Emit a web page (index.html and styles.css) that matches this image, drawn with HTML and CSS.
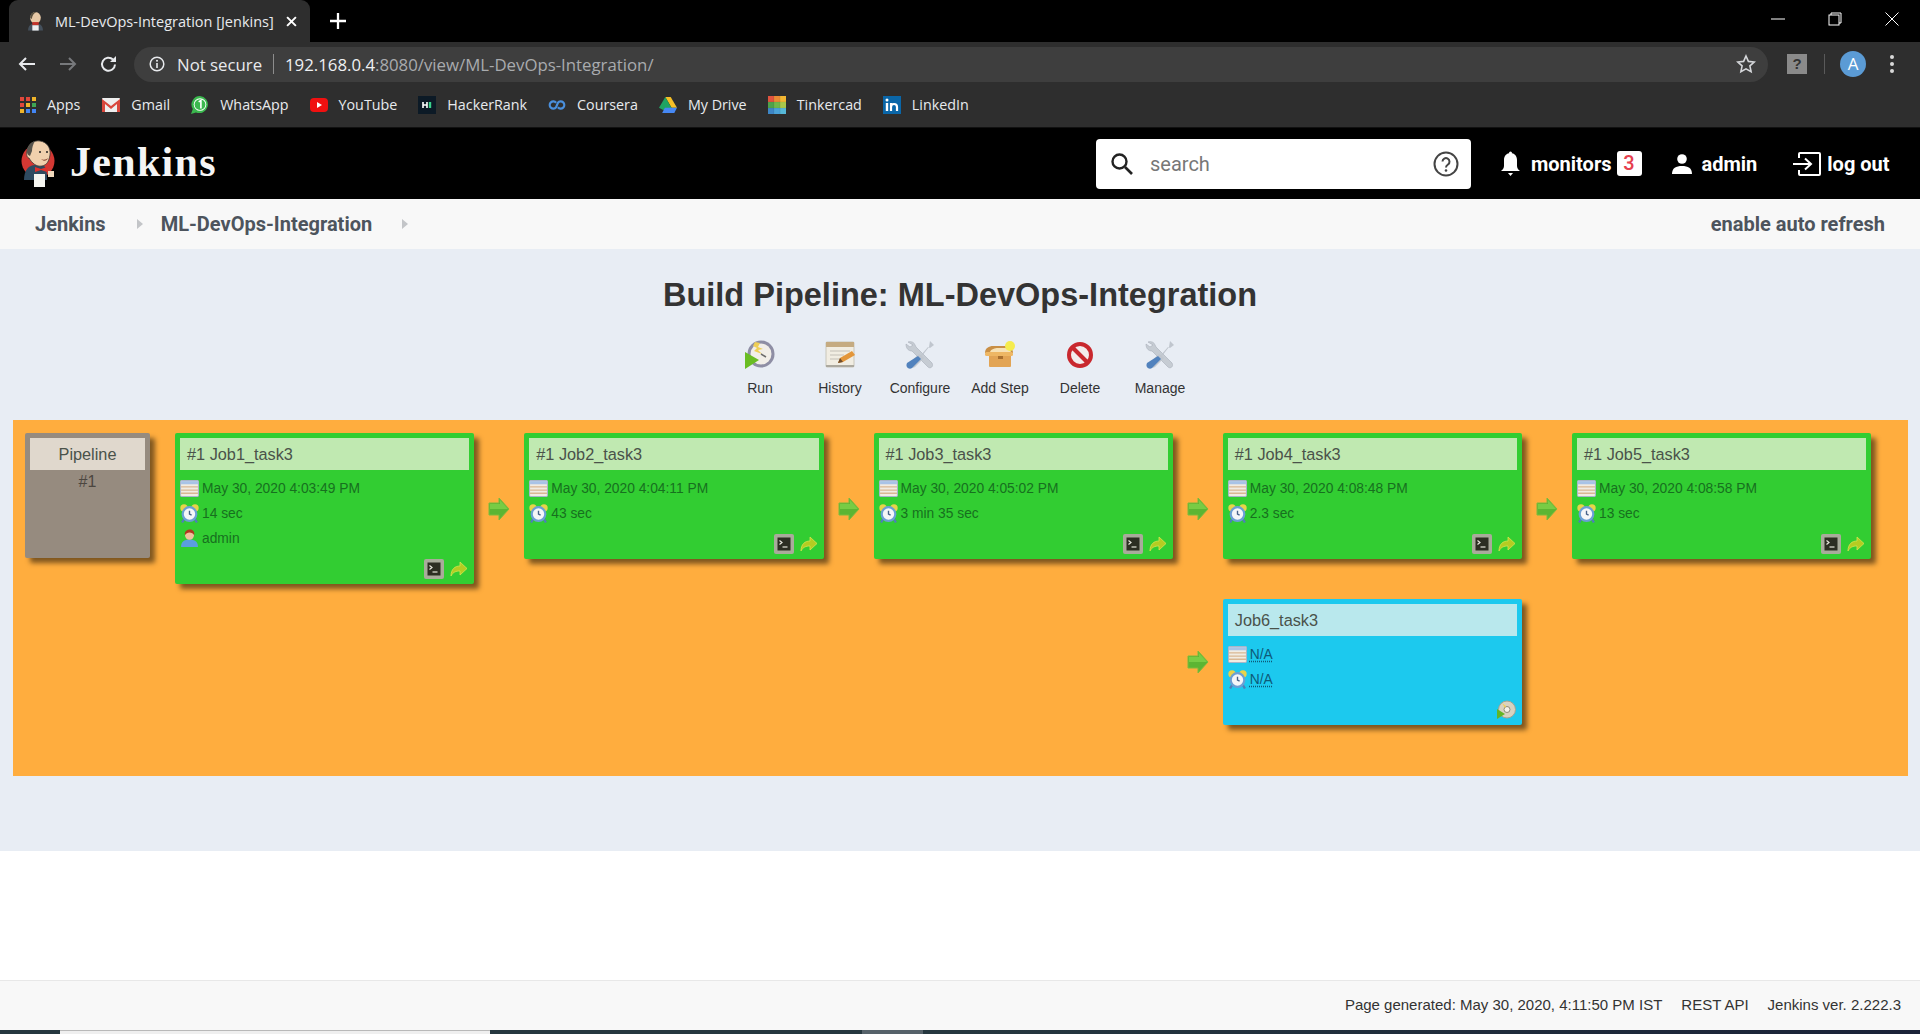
FILE: index.html
```html
<!DOCTYPE html>
<html lang="en">
<head>
<meta charset="utf-8">
<title>ML-DevOps-Integration [Jenkins]</title>
<link rel="stylesheet" href="styles.css">
</head>
<body>
<svg class="sprite" aria-hidden="true">
  <symbol id="i-cal" viewBox="0 0 18 18">
    <rect x="0.5" y="1.5" width="17" height="15" rx="1" fill="#f1ece2" stroke="#a9b6c9"/>
    <rect x="1" y="2" width="16" height="3" fill="#a8c3e6"/>
    <path d="M1 7.5h16M1 10.5h16M1 13.5h16" stroke="#d9b793" stroke-width="1.2"/>
  </symbol>
  <symbol id="i-clock" viewBox="0 0 18 18">
    <circle cx="3.800" cy="3.800" r="3.500" fill="#e8d34a"/>
    <circle cx="14.200" cy="3.800" r="3.500" fill="#e8d34a"/>
    <path d="M4 14l-2 3.500M14 14l2 3.500" stroke="#4d7fb8" stroke-width="2.200"/>
    <circle cx="9" cy="9.500" r="7.500" fill="#6a9fd4"/>
    <circle cx="9" cy="9.500" r="5.400" fill="#f5f6f8"/>
    <path d="M9 6.500v3l2 1" stroke="#47628a" stroke-width="1.300" fill="none"/>
  </symbol>
  <symbol id="i-user" viewBox="0 0 18 18">
    <path d="M1 17c0-5 3-7 8-7s8 2 8 7z" fill="#5b9ee0"/>
    <circle cx="9" cy="6" r="4.200" fill="#f0c09c"/>
    <path d="M4.600 6C4 2 7 .5 9.500.5c3 0 4.500 2.500 4 5.500-1-2-2.500-2.800-4.500-2.800S6 4 4.600 6z" fill="#b0391f"/>
  </symbol>
  <symbol id="i-term" viewBox="0 0 20 20">
    <rect x="0" y="0" width="20" height="20" rx="2" fill="#a9ab9b"/>
    <rect x="3.500" y="3.500" width="13" height="13" fill="#2c2e22"/>
    <path d="M5.500 6.500l2.500 2-2.500 2" stroke="#e7e7dc" stroke-width="1.200" fill="none"/>
    <path d="M8.500 13h5" stroke="#e7e7dc" stroke-width="1.200"/>
  </symbol>
  <symbol id="i-next" viewBox="0 0 18 18">
    <path d="M1 16C1 9 5 6 10 6V2l7 6.500-7 6.500v-4c-4 0-7 1-9 5z" fill="#b5cc22" stroke="#d4e34e" stroke-width=".8"/>
  </symbol>
  <symbol id="i-arrow" viewBox="0 0 22 24">
    <path d="M1 6h10V1l10 11-10 11v-5H1z" fill="#5cb533" stroke="#7dbb3c"/>
    <path d="M2 7h10V3l8 9H2z" fill="#78cc45"/>
  </symbol>
  <symbol id="i-run" viewBox="0 0 32 32">
    <circle cx="17" cy="15" r="13.500" fill="#8e8ea4"/>
    <circle cx="17" cy="15" r="10.500" fill="#f1eee8"/>
    <path d="M11 3l5 1-2 4 5 2-5 1 4 4-8-3 3-3-4-2z" fill="#efcf56"/>
    <path d="M17 15l5 3" stroke="#6b6b6b" stroke-width="1.500"/>
    <path d="M1 13l14 8-14 9z" fill="#69bd22"/>
  </symbol>
  <symbol id="i-history" viewBox="0 0 32 32">
    <rect x="2" y="3" width="28" height="25" rx="1" fill="#f1ede2" stroke="#c9c6ba"/>
    <rect x="2" y="3" width="28" height="5" fill="#c5ab81"/>
    <path d="M6 12h20M6 16h14M6 20h10" stroke="#c4c0b5" stroke-width="1.200"/>
    <rect x="2" y="26" width="28" height="2" fill="#aca99f"/>
    <path d="M14 24l2-5 12-7 3 4-12 7z" fill="#e3963a"/>
    <path d="M14 24l2-5 3 4z" fill="#6d4c2d"/>
  </symbol>
  <symbol id="i-conf" viewBox="0 0 32 32">
    <path d="M4 3c3-1 6 0 7 3l1 2 16 16c2 4-2 6-4 4L8 12c-3 0-6-2-6-7l4 3 3-2z" fill="#c6ccd3" stroke="#a7afb8" stroke-width=".6"/>
    <path d="M26 2l4 4-4 3-2-1-7 8 3 3-9 9c-3 2-7-1-5-5l9-8 3 2 7-9z" fill="#c0c6ce"/>
    <path d="M14 17l3 3-9 9c-3 2-7-1-5-5z" fill="#5182bd"/>
  </symbol>
  <symbol id="i-box" viewBox="0 0 32 32">
    <path d="M5 14h22v13a1 1 0 0 1-1 1H6a1 1 0 0 1-1-1z" fill="#e2a454"/>
    <path d="M1 14c0-5 4-7 8-7h13c4 0 7 3 7 7z" fill="#c98f45"/>
    <path d="M6 13c1-3 5-4 8-4h7c3 0 5 2 6 4z" fill="#f7e2b5"/>
    <rect x="1" y="13" width="28" height="4" rx="1.500" fill="#eeb764"/>
    <rect x="14" y="17" width="5" height="3" fill="#a86f2e"/>
    <circle cx="26" cy="7" r="5" fill="#f5ec4e"/>
  </symbol>
  <symbol id="i-del" viewBox="0 0 32 32">
    <circle cx="16" cy="16" r="11" fill="#f3ecec" stroke="#c9282e" stroke-width="4"/>
    <path d="M8 8l16 16" stroke="#c9282e" stroke-width="4"/>
  </symbol>
  <symbol id="i-cd" viewBox="0 0 20 20">
    <circle cx="11" cy="9.500" r="8.500" fill="#d8d2c0" stroke="#a7a290"/>
    <circle cx="11" cy="9.500" r="3" fill="#f5f2ea" stroke="#8f8b7a"/>
    <path d="M6 3l4 3-1 2z" fill="#f0cf5a"/>
    <path d="M1 9l8 5-8 5z" fill="#62b526"/>
  </symbol>
</svg>

<header class="tabstrip">
  <div class="tab">
    <svg class="fav" viewBox="0 0 16 18"><ellipse cx="8" cy="6" rx="5" ry="5.500" fill="#e8c9a6"/><path d="M3 6C3 2 6 0 9 .5 6 2 5 4 4.500 7z" fill="#59503f"/><path d="M1 18c0-5 3-7 7-7s7 2 7 7z" fill="#44505c"/><rect x="5" y="10" width="6" height="3" fill="#c2342b"/><rect x="5" y="13" width="6" height="5" fill="#eee"/></svg>
    <span class="tab-title">ML-DevOps-Integration [Jenkins]</span>
    <svg class="tab-x" viewBox="0 0 10 10"><path d="M1 1l8 8M9 1l-8 8" stroke="#fff" stroke-width="1.800"/></svg>
  </div>
  <svg class="newtab" viewBox="0 0 14 14"><path d="M7 0v14M0 7h14" stroke="#fff" stroke-width="2"/></svg>
  <div class="winctl">
    <svg viewBox="0 0 14 14"><path d="M0 7h14" stroke="#fff"/></svg>
    <svg viewBox="0 0 14 14"><path d="M3 3V1h10v10h-2" fill="none" stroke="#fff"/><rect x="1" y="3" width="10" height="10" fill="none" stroke="#fff"/></svg>
    <svg viewBox="0 0 14 14"><path d="M.5.500l13 13M13.500.500l-13 13" stroke="#fff"/></svg>
  </div>
</header>

<div class="toolbar">
  <svg class="nav" viewBox="0 0 18 18"><path d="M17 9H2M8 3L2 9l6 6" fill="none" stroke="#e8eaed" stroke-width="2"/></svg>
  <svg class="nav" viewBox="0 0 18 18"><path d="M1 9h15M10 3l6 6-6 6" fill="none" stroke="#77797c" stroke-width="2"/></svg>
  <svg class="nav" viewBox="0 0 18 18"><path d="M15 9.500A6.500 6.500 0 1 1 13 4.500" fill="none" stroke="#e8eaed" stroke-width="2"/><path d="M16 1v6h-6z" fill="#e8eaed"/></svg>
  <div class="omnibox">
    <svg class="info" viewBox="0 0 16 16"><circle cx="8" cy="8" r="6.800" fill="none" stroke="#e8eaed" stroke-width="1.500"/><path d="M8 7v5" stroke="#e8eaed" stroke-width="1.600"/><circle cx="8" cy="4.800" r="1" fill="#e8eaed"/></svg>
    <span class="secure">Not secure</span>
    <span class="omni-sep"></span>
    <span class="url"><b>192.168.0.4</b>:8080/view/ML-DevOps-Integration/</span>
    <svg class="star" viewBox="0 0 20 20"><path d="M10 2l2.400 5.400 5.800.600-4.300 3.900 1.200 5.800L10 14.800l-5.100 2.900 1.200-5.800L1.800 8l5.800-.600z" fill="none" stroke="#d5d7da" stroke-width="1.600"/></svg>
  </div>
  <div class="ext">?</div>
  <span class="tool-sep"></span>
  <div class="avatar">A</div>
  <div class="dots"><i></i><i></i><i></i></div>
</div>

<nav class="bookmarks">
  <a class="bm bm-apps"><svg viewBox="0 0 16 16"><path d="M0 0h4v4H0z" fill="#e0483b"/><path d="M6 0h4v4H6z" fill="#e0483b"/><path d="M12 0h4v4h-4z" fill="#f0b429"/><path d="M0 6h4v4H0z" fill="#e0483b"/><path d="M6 6h4v4H6z" fill="#f0b429"/><path d="M12 6h4v4h-4z" fill="#3fa654"/><path d="M0 12h4v4H0z" fill="#f0b429"/><path d="M6 12h4v4H6z" fill="#4285f4"/><path d="M12 12h4v4h-4z" fill="#4285f4"/></svg>Apps</a>
  <a class="bm"><svg viewBox="0 0 18 14"><rect width="18" height="14" rx="1" fill="#eee"/><path d="M0 1l9 7 9-7v13h-3V6L9 11 3 6v8H0z" fill="#d9473c"/></svg>Gmail</a>
  <a class="bm"><svg viewBox="0 0 20 20"><path d="M10 0a9.500 9.500 0 0 0-8 14.500L0 20l5.500-1.800A9.500 9.500 0 1 0 10 0z" fill="#3bb84e"/><circle cx="10" cy="9.500" r="7" fill="#fff"/><circle cx="10" cy="9.500" r="6" fill="#3bb84e"/><path d="M8.500 6.500L11 5v9" fill="none" stroke="#fff" stroke-width="1.800"/></svg>WhatsApp</a>
  <a class="bm"><svg viewBox="0 0 18 14"><rect width="18" height="14" rx="4" fill="#f01010"/><path d="M7 4l5 3-5 3z" fill="#fff"/></svg>YouTube</a>
  <a class="bm"><svg viewBox="0 0 18 18"><rect width="18" height="18" fill="#0c1a26"/><path d="M5 6v6M9 6v6M5 9h4" stroke="#fff" stroke-width="1.600"/><path d="M12 6v6" stroke="#39d28a" stroke-width="2.400"/></svg>HackerRank</a>
  <a class="bm"><svg viewBox="0 0 20 12"><path d="M9 3.500A4 4 0 1 0 9 8.500L11 3.500A4 4 0 1 1 11 8.500" fill="none" stroke="#4a8fdc" stroke-width="2.400"/></svg>Coursera</a>
  <a class="bm"><svg viewBox="0 0 20 18"><path d="M7 0h6l7 12h-6z" fill="#f6bf26"/><path d="M7 0l6.800 12-3 6L0 12z" fill="#1fa463"/><path d="M6.500 12H20l-3 6H3.500z" fill="#4688f4"/></svg>My Drive</a>
  <a class="bm"><svg viewBox="0 0 20 20"><rect width="6.600" height="6.600" fill="#e0533f"/><rect x="6.700" width="6.600" height="6.600" fill="#e98a34"/><rect x="13.400" width="6.600" height="6.600" fill="#f2b632"/><rect y="6.700" width="6.600" height="6.600" fill="#4ea24b"/><rect x="6.700" y="6.700" width="6.600" height="6.600" fill="#70b84a"/><rect x="13.400" y="6.700" width="6.600" height="6.600" fill="#a9c84a"/><rect y="13.400" width="6.600" height="6.600" fill="#3d86c6"/><rect x="6.700" y="13.400" width="6.600" height="6.600" fill="#4aa2d8"/><rect x="13.400" y="13.400" width="6.600" height="6.600" fill="#56b8d8"/></svg>Tinkercad</a>
  <a class="bm"><svg viewBox="0 0 18 18"><rect width="18" height="18" fill="#0a66a8"/><path d="M4 7v8" stroke="#fff" stroke-width="2.400"/><circle cx="4" cy="4" r="1.500" fill="#fff"/><path d="M8 15V7M8 11c0-4 6-4 6 0v4" fill="none" stroke="#fff" stroke-width="2.200"/></svg>LinkedIn</a>
</nav>

<header class="jk-head">
  <svg class="logo" viewBox="0 0 36 48">
    <circle cx="18" cy="21" r="16.500" fill="#d33833"/>
    <path d="M4 40c0-10 5-15 11-15l9 1c3 2 3 8 3 14z" fill="#2f4a60"/>
    <path d="M7 11C8 4 14 0 20 1c7 1 11 7 10 14-1 6-3 10-8 11-6 1-10-3-13-8-2 0-3-4-2-7z" fill="#f0d0ad" stroke="#3c3a36" stroke-width=".8"/>
    <path d="M7 12C7 5 12 2 15 1c-2 3-3 7-3 10l-2 5c-2-1-3-2-3-4z" fill="#57544d"/>
    <path d="M21 19c2 1 5 1 7-1-1 3-4 4-7 1z" fill="#8c4c36"/>
    <circle cx="20" cy="12" r="1" fill="#222"/><circle cx="27" cy="12" r="1" fill="#222"/>
    <path d="M15 27l6 2 6-2v5l-6-2-6 2z" fill="#e0302b"/>
    <path d="M14 34h11v13H14z" fill="#f5f5f0"/>
    <path d="M28 31h6v6h-6z" fill="#f0d8bc"/>
  </svg>
  <span class="brand">Jenkins</span>
  <div class="search">
    <svg class="s-ico" viewBox="0 0 24 24"><circle cx="9.500" cy="9.500" r="7" fill="none" stroke="#222" stroke-width="2.400"/><path d="M15 15l7 7" stroke="#222" stroke-width="2.600"/></svg>
    <span class="s-text">search</span>
    <svg class="s-help" viewBox="0 0 26 26"><circle cx="13" cy="13" r="11.500" fill="none" stroke="#444" stroke-width="2"/><path d="M9.500 10.500a3.500 3.500 0 1 1 5.500 3c-1.500 1-2 1.500-2 3" fill="none" stroke="#444" stroke-width="2"/><circle cx="13" cy="19.500" r="1.300" fill="#444"/></svg>
  </div>
  <svg class="h-bell" viewBox="0 0 21 26"><path d="M10.500 2c-4 0-6.500 3-6.500 7v6c0 2-1.500 4-3 5h19c-1.500-1-3-3-3-5V9c0-4-2.500-7-6.500-7z" fill="#fff"/><circle cx="10.500" cy="2" r="1.500" fill="#fff"/><path d="M8 22h5l-2.500 3z" fill="#fff"/></svg>
  <span class="h-link h-mon">monitors</span>
  <span class="badge">3</span>
  <svg class="h-user" viewBox="0 0 20 20"><circle cx="10" cy="5" r="4.800" fill="#fff"/><path d="M0 20c0-6 4-8 10-8s10 2 10 8z" fill="#fff"/></svg>
  <span class="h-link h-adm">admin</span>
  <svg class="h-out" viewBox="0 0 28 24"><path d="M6 6V2a1 1 0 0 1 1-1h19a1 1 0 0 1 1 1v20a1 1 0 0 1-1 1H7a1 1 0 0 1-1-1v-4" fill="none" stroke="#fff" stroke-width="2"/><path d="M0 12h17M12 6.500l6 5.500-6 5.500" fill="none" stroke="#fff" stroke-width="2"/></svg>
  <span class="h-link">log out</span>
</header>

<div class="crumbs">
  <a class="crumb">Jenkins</a><i class="tri tri-a"></i>
  <a class="crumb">ML-DevOps-Integration</a><i class="tri tri-b"></i>
  <a class="crumb refresh">enable auto refresh</a>
</div>

<main class="main">
  <h1 class="title">Build Pipeline: ML-DevOps-Integration</h1>
  <div class="actions">
    <a class="act"><svg><use href="#i-run"/></svg>Run</a>
    <a class="act"><svg><use href="#i-history"/></svg>History</a>
    <a class="act"><svg><use href="#i-conf"/></svg>Configure</a>
    <a class="act"><svg><use href="#i-box"/></svg>Add Step</a>
    <a class="act"><svg><use href="#i-del"/></svg>Delete</a>
    <a class="act"><svg><use href="#i-conf"/></svg>Manage</a>
  </div>
  <section class="board">
    <div class="pipe">
      <div class="bar bar-pipe">Pipeline</div>
      <div class="pipe-no">#1</div>
    </div>

    <div class="card ok job1 c3">
      <div class="bar">#1 Job1_task3</div>
      <div class="row"><svg><use href="#i-cal"/></svg>May 30, 2020 4:03:49 PM</div>
      <div class="row"><svg><use href="#i-clock"/></svg>14 sec</div>
      <div class="row"><svg><use href="#i-user"/></svg>admin</div>
      <div class="foot"><svg class="f-term"><use href="#i-term"/></svg><svg class="f-next"><use href="#i-next"/></svg></div>
    </div>
    <div class="arr c4"><svg><use href="#i-arrow"/></svg></div>

    <div class="card ok c5">
      <div class="bar">#1 Job2_task3</div>
      <div class="row"><svg><use href="#i-cal"/></svg>May 30, 2020 4:04:11 PM</div>
      <div class="row"><svg><use href="#i-clock"/></svg>43 sec</div>
      <div class="foot"><svg class="f-term"><use href="#i-term"/></svg><svg class="f-next"><use href="#i-next"/></svg></div>
    </div>
    <div class="arr c6"><svg><use href="#i-arrow"/></svg></div>

    <div class="card ok c7">
      <div class="bar">#1 Job3_task3</div>
      <div class="row"><svg><use href="#i-cal"/></svg>May 30, 2020 4:05:02 PM</div>
      <div class="row"><svg><use href="#i-clock"/></svg>3 min 35 sec</div>
      <div class="foot"><svg class="f-term"><use href="#i-term"/></svg><svg class="f-next"><use href="#i-next"/></svg></div>
    </div>
    <div class="arr c8"><svg><use href="#i-arrow"/></svg></div>

    <div class="card ok c9">
      <div class="bar">#1 Job4_task3</div>
      <div class="row"><svg><use href="#i-cal"/></svg>May 30, 2020 4:08:48 PM</div>
      <div class="row"><svg><use href="#i-clock"/></svg>2.3 sec</div>
      <div class="foot"><svg class="f-term"><use href="#i-term"/></svg><svg class="f-next"><use href="#i-next"/></svg></div>
    </div>
    <div class="arr c10"><svg><use href="#i-arrow"/></svg></div>

    <div class="card ok c11">
      <div class="bar">#1 Job5_task3</div>
      <div class="row"><svg><use href="#i-cal"/></svg>May 30, 2020 4:08:58 PM</div>
      <div class="row"><svg><use href="#i-clock"/></svg>13 sec</div>
      <div class="foot"><svg class="f-term"><use href="#i-term"/></svg><svg class="f-next"><use href="#i-next"/></svg></div>
    </div>

    <div class="arr arr-r2 c8"><svg><use href="#i-arrow"/></svg></div>
    <div class="card idle job6 c9">
      <div class="bar">Job6_task3</div>
      <div class="row"><svg><use href="#i-cal"/></svg><a class="na">N/A</a></div>
      <div class="row"><svg><use href="#i-clock"/></svg><a class="na">N/A</a></div>
      <div class="foot"><svg class="f-cd"><use href="#i-cd"/></svg></div>
    </div>
  </section>
</main>

<div class="blank"></div>

<footer class="footer">
  <span>Page generated: May 30, 2020, 4:11:50 PM IST</span>
  <span>REST API</span>
  <span>Jenkins ver. 2.222.3</span>
</footer>
<div class="taskstrip"><i class="ts-a"></i><i class="ts-b"></i></div>
</body>
</html>
```

FILE: styles.css
```css
* { box-sizing: border-box; }
html, body { margin: 0; padding: 0; }
body {
  width: 1920px;
  height: 1034px;
  overflow: hidden;
  display: flex;
  flex-direction: column;
  background: #fff;
  font-family: "Liberation Sans", Arial, sans-serif;
  color: #333;
}
svg { flex: none; display: block; }
.sprite { position: absolute; width: 0; height: 0; overflow: hidden; }

/* browser chrome */
.tabstrip {
  height: 42px;
  background: #000;
  display: flex;
  align-items: flex-end;
  padding-left: 9px;
  flex: none;
}
.tab {
  width: 301px;
  height: 42px;
  background: #2e2e2e;
  border-radius: 9px 9px 0 0;
  display: flex;
  align-items: center;
  padding-left: 18px;
  color: #e8eaed;
  font: 14.5px "Open Sans", sans-serif;
}
.fav { width: 17px; height: 20px; margin-right: 11px; }
.tab-title { width: 219px; white-space: nowrap; }
.tab-x { width: 11px; height: 11px; margin-left: 12px; }
.newtab { width: 16px; height: 16px; margin: 0 0 13px 20px; }
.winctl { margin-left: auto; display: flex; align-self: flex-start; gap: 43px; padding: 12px 21px 0 0; }
.winctl svg { width: 14px; height: 14px; }
.toolbar {
  height: 44px;
  background: #2e2e2e;
  display: flex;
  align-items: center;
  padding: 0 0 0 18px;
  flex: none;
}
.nav { width: 18px; height: 18px; margin-right: 23px; }
.nav + .nav { margin-right: 23px; }
.nav + .nav + .nav { margin-right: 16px; }
.omnibox {
  width: 1634px;
  height: 35px;
  border-radius: 18px;
  background: #3e3e3e;
  display: flex;
  align-items: center;
  padding-left: 15px;
  font: 16.8px "Open Sans", sans-serif;
  color: #e8eaed;
}
.info { width: 16px; height: 16px; margin-right: 12px; }
.secure { width: 85px; white-space: nowrap; }
.omni-sep { width: 1px; height: 20px; background: #8d8d8d; margin: 0 11px; }
.url { width: 368px; white-space: nowrap; color: #a9abae; }
.url b { font-weight: 400; color: #eef0f2; }
.star { width: 20px; height: 20px; margin-left: auto; margin-right: 12px; }
.ext {
  width: 20px;
  height: 20px;
  margin-left: 19px;
  background: #8a8a8a;
  color: #333;
  font: bold 15px/20px "Liberation Sans", sans-serif;
  text-align: center;
}
.tool-sep { width: 1px; height: 20px; background: #5a5a5a; margin: 0 15px 0 17px; }
.avatar {
  width: 26px;
  height: 26px;
  border-radius: 50%;
  background: #5b9bd5;
  color: #fff;
  font: 17px/26px "Open Sans", sans-serif;
  text-align: center;
}
.dots { display: flex; flex-direction: column; gap: 3px; margin-left: 24px; }
.dots i { width: 4px; height: 4px; border-radius: 50%; background: #d8d8d8; }
.bookmarks {
  height: 42px;
  background: #2e2e2e;
  display: flex;
  align-items: center;
  padding: 0 0 4px 20px;
  color: #e8eaed;
  font: 14.3px "Open Sans", sans-serif;
  gap: 21px;
  flex: none;
  border-bottom: 1px solid #111;
}
.bm { display: flex; align-items: center; gap: 11px; white-space: nowrap; }
.bm svg { width: 18px; height: 18px; }
.bm-apps { margin-right: 1px; }
.bm-apps svg { width: 16px; height: 16px; }

/* Jenkins header */
.jk-head {
  height: 71px;
  background: #000;
  display: flex;
  align-items: center;
  padding-left: 20px;
  color: #fff;
  flex: none;
}
.logo { width: 36px; height: 48px; }
.brand {
  margin: 0 0 4px 14px;
  width: 1026px;
  font: bold 42px "Liberation Serif", serif;
  letter-spacing: 1.3px;
  color: #f5f5f5;
}
.search {
  width: 375px;
  height: 50px;
  background: #fff;
  border-radius: 4px;
  display: flex;
  align-items: center;
  padding-left: 14px;
}
.s-ico { width: 24px; height: 24px; }
.s-text { margin-left: 16px; font: 20px Roboto, sans-serif; color: #777; }
.s-help { width: 26px; height: 26px; margin-left: auto; margin-right: 12px; }
.h-bell { width: 21px; height: 26px; margin-left: 29px; }
.h-link { font: 700 20px Roboto, sans-serif; white-space: nowrap; }
.h-mon { margin-left: 10px; }
.badge {
  width: 25px;
  height: 25px;
  margin-left: 5px;
  background: #fff;
  border-radius: 3px;
  color: #e6404f;
  font: 500 20px/25px Roboto, sans-serif;
  text-align: center;
}
.h-user { width: 20px; height: 20px; margin-left: 30px; }
.h-adm { margin-left: 10px; }
.h-out { width: 28px; height: 24px; margin: 0 6px 0 36px; }

/* breadcrumb */
.crumbs {
  height: 50px;
  background: #f8f8f8;
  display: flex;
  align-items: center;
  padding: 0 35px;
  flex: none;
}
.crumb { font: 700 20px Roboto, sans-serif; color: #4d545d; white-space: nowrap; }
.tri { width: 0; height: 0; border: 5px solid transparent; border-left: 6px solid #c3c5c8; border-right: 0; }
.tri-a { margin: 0 18px 0 31px; }
.tri-b { margin-left: 30px; }
.refresh { margin-left: auto; }

/* main */
.main {
  height: 602px;
  background: #e8edf4;
  padding-top: 26px;
  flex: none;
}
.title {
  margin: 0;
  text-align: center;
  font: bold 32.500px/40px "Liberation Sans", sans-serif;
  color: #333;
}
.actions {
  display: flex;
  justify-content: center;
  margin-top: 24px;
}
.act {
  width: 80px;
  display: flex;
  flex-direction: column;
  align-items: center;
  font-size: 14px;
  line-height: 16px;
  color: #333;
}
.act svg { width: 32px; height: 32px; margin-bottom: 9px; }
.board {
  margin: 24px 12px 0 13px;
  height: 356px;
  background: #ffad3e;
  padding: 13px 0 0 12px;
  display: grid;
  grid-template-columns: 125px 25px 299.25px 50px 299.25px 50px 299.25px 50px 299.25px 50px 299.25px;
  grid-template-rows: 151px 126px;
  row-gap: 15px;
  align-items: start;
}
.c3 { grid-column: 3; grid-row: 1; }
.c4 { grid-column: 4; grid-row: 1; }
.c5 { grid-column: 5; grid-row: 1; }
.c6 { grid-column: 6; grid-row: 1; }
.c7 { grid-column: 7; grid-row: 1; }
.c8 { grid-column: 8; grid-row: 1; }
.c9 { grid-column: 9; grid-row: 1; }
.c10 { grid-column: 10; grid-row: 1; }
.c11 { grid-column: 11; grid-row: 1; }
.pipe {
  grid-column: 1;
  grid-row: 1;
  height: 125px;
  padding: 5px;
  background: #968b7f;
  border-radius: 2px;
  box-shadow: 5px 5px 5px rgba(0, 0, 0, .5);
  text-align: center;
}
.pipe-no { margin-top: 3px; font-size: 16px; line-height: 18px; color: #4c463f; }
.bar {
  height: 32px;
  padding-left: 7px;
  background: #c0e9b1;
  font-size: 16.3px;
  line-height: 32px;
  color: #4a524a;
}
.bar-pipe { padding: 0; background: #e0d8cd; }
.card {
  display: flex;
  flex-direction: column;
  height: 126px;
  padding: 5px;
  border-radius: 2px;
  box-shadow: 5px 5px 5px rgba(0, 0, 0, .5);
}
.ok { background: #32cd32; color: #17701f; }
.job1 { height: 151px; }
.idle { background: #1cc9ee; color: #0e5a78; }
.idle .bar { background: #b9e8ed; }
.job6 { grid-row: 2; }
.row {
  display: flex;
  align-items: center;
  gap: 3px;
  height: 25px;
  font-size: 13.8px;
  white-space: nowrap;
}
.bar + .row { margin-top: 6px; }
.row svg { width: 19px; height: 19px; }
.na { text-decoration: underline dotted; text-underline-offset: 2px; }
.foot {
  margin-top: auto;
  display: flex;
  justify-content: flex-end;
  align-items: center;
  gap: 6px;
  height: 20px;
}
.f-term { width: 20px; height: 20px; }
.f-next { width: 18px; height: 18px; margin-right: 1px; }
.f-cd { width: 20px; height: 20px; margin-right: 1px; }
.arr { height: 151px; display: flex; align-items: center; justify-content: center; }
.arr svg { width: 22px; height: 24px; }
.arr-r2 { grid-row: 2; height: 126px; }

/* bottom */
.blank { flex: 1; background: #fff; }
.footer {
  height: 50px;
  background: #f8f8f8;
  border-top: 1px solid #e8e8e8;
  display: flex;
  justify-content: flex-end;
  align-items: center;
  gap: 19px;
  padding: 0 19px 2px 0;
  font-size: 15px;
  color: #333;
  flex: none;
}
.taskstrip {
  height: 4px;
  flex: none;
  display: flex;
  padding-left: 60px;
  background: linear-gradient(90deg, #25373f 0, #25373f 50%, #1a2238 100%);
}
.ts-a { width: 430px; background: #efefef; border-top: 1px solid #b9b9b9; }
.ts-b { width: 61px; margin-left: 372px; background: #56626a; }
```
